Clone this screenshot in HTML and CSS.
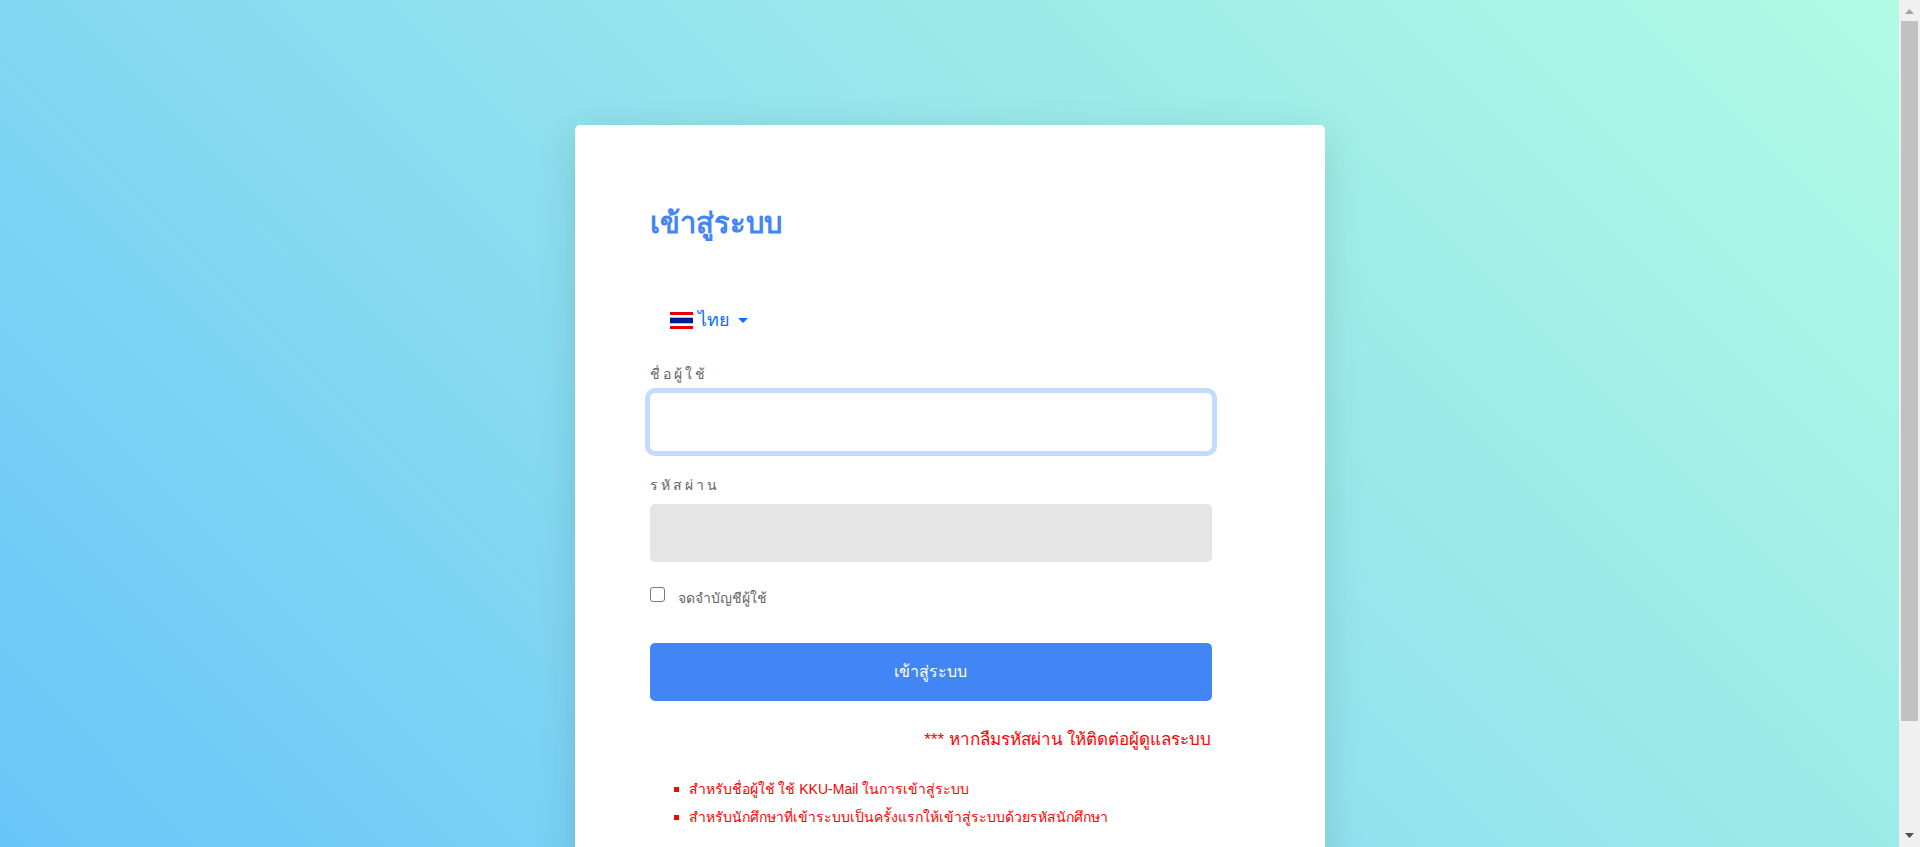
FILE: index.html
```html
<!DOCTYPE html>
<html lang="th">
<head>
<meta charset="utf-8">
<title>เข้าสู่ระบบ</title>
<meta name="viewport" content="width=device-width, initial-scale=1">
<link rel="stylesheet" href="styles.css">
</head>
<body>
<div class="viewport">
  <main class="page">
    <section class="card">
      <h1 class="title">เข้าสู่ระบบ</h1>
      <button class="language" type="button">
        <svg class="flag" viewBox="0 0 23 17" preserveAspectRatio="none" aria-hidden="true">
          <rect width="23" height="17" fill="#fff"/>
          <rect width="23" height="3" fill="#e60000"/>
          <rect y="14" width="23" height="3" fill="#e60000"/>
          <rect y="5" width="23" height="7" fill="#b3b8df"/>
          <rect y="6" width="23" height="5" fill="#001a98"/>
        </svg>
        <span>ไทย</span>
        <span class="caret"></span>
      </button>
      <form class="form">
        <div class="field">
          <label class="label" for="username">ชื่อผู้ใช้</label>
          <input class="input input-active" id="username" type="text">
        </div>
        <div class="field">
          <label class="label" for="password">รหัสผ่าน</label>
          <input class="input" id="password" type="password">
        </div>
        <div class="remember">
          <input class="check" id="remember" type="checkbox">
          <label class="remember-label" for="remember">จดจำบัญชีผู้ใช้</label>
        </div>
        <button class="submit" type="submit">เข้าสู่ระบบ</button>
      </form>
      <p class="forgot">*** หากลืมรหัสผ่าน ให้ติดต่อผู้ดูแลระบบ</p>
      <ul class="notes">
        <li>สำหรับชื่อผู้ใช้ ใช้ KKU-Mail ในการเข้าสู่ระบบ</li>
        <li>สำหรับนักศึกษาที่เข้าระบบเป็นครั้งแรกให้เข้าสู่ระบบด้วยรหัสนักศึกษา</li>
      </ul>
    </section>
  </main>
</div>
<div class="scrollbar" aria-hidden="true">
  <svg class="arrow" viewBox="0 0 21 21"><path d="M6 14L10.5 9L15 14Z" fill="#a3a3a3"/></svg>
  <div class="track"><div class="thumb"></div></div>
  <svg class="arrow" viewBox="0 0 21 21"><path d="M6 7L10.5 12L15 7Z" fill="#505050"/></svg>
</div>
</body>
</html>
```

FILE: styles.css
```css
* {
  box-sizing: border-box;
}

body {
  margin: 0;
  display: flex;
  height: 100vh;
  overflow: hidden;
  font-family: "Liberation Sans", "Noto Sans", sans-serif;
  color: #666;
}

.viewport {
  flex: 1;
  overflow: hidden;
}

.page {
  padding: 125px 24px 80px;
  background: linear-gradient(45deg, #66c2fa 0%, #8fe1ee 50%, #b1fbe3 100%);
}

.card {
  max-width: 750px;
  margin: 0 auto;
  padding: 76px 113px 65px 75px;
  background: #fff;
  border-radius: 5px;
  box-shadow: 0 8px 40px rgba(0, 0, 0, 0.12);
}

.title {
  margin: 0 0 55px;
  font-size: 29px;
  line-height: 44px;
  font-weight: 700;
  color: #4285f4;
}

.language {
  display: flex;
  align-items: center;
  gap: 5px;
  margin: 0 0 22px;
  padding: 6px 20px;
  border: 0;
  background: none;
  font: 18px/28px "Liberation Sans", "Noto Sans", sans-serif;
  color: #0d6efd;
}

.flag {
  width: 23px;
  height: 17px;
}

.caret {
  margin-left: 3px;
  border: 5px solid transparent;
  border-top-color: #0d6efd;
  border-bottom: 0;
}

.field {
  display: flex;
  flex-direction: column;
  gap: 7px;
  margin-bottom: 22px;
}

.label {
  font-size: 14px;
  line-height: 24px;
  letter-spacing: 3px;
}

.input {
  width: 100%;
  height: 58px;
  padding: 0 20px;
  border: 0;
  border-radius: 5px;
  outline: 0;
  background: #e5e5e5;
  font-size: 16px;
}

.input-active {
  background: #fff;
  box-shadow: 0 0 0 5px #c2dbfe;
}

.remember {
  display: flex;
  align-items: flex-start;
  gap: 13px;
  margin-bottom: 31px;
}

.check {
  appearance: none;
  width: 15px;
  height: 15px;
  margin: 3px 0 0;
  border: 1px solid #767676;
  border-radius: 3px;
}

.remember-label {
  font-size: 14px;
  line-height: 28px;
}

.submit {
  display: block;
  width: 100%;
  height: 58px;
  border: 0;
  border-radius: 5px;
  background: #4285f4;
  color: #fff;
  font: 500 16px/24px "Liberation Sans", "Noto Sans", sans-serif;
}

.forgot {
  margin: 25px 0 21px;
  font-size: 17px;
  line-height: 28px;
  text-align: right;
  color: #f00;
}

.notes {
  margin: 0;
  padding-left: 24px;
  list-style: none;
  font-size: 14px;
  line-height: 28px;
  color: #f00;
}

.notes li {
  display: flex;
  align-items: center;
  gap: 10px;
}

.notes li::before {
  content: "";
  width: 5px;
  height: 5px;
  background: #f00;
}

.scrollbar {
  display: flex;
  flex-direction: column;
  width: 21px;
  background: #f0f0f0;
}

.arrow {
  width: 21px;
  height: 21px;
}

.track {
  flex: 1;
  padding: 0 2px;
}

.thumb {
  height: 87%;
  background: #c1c1c1;
}
```
